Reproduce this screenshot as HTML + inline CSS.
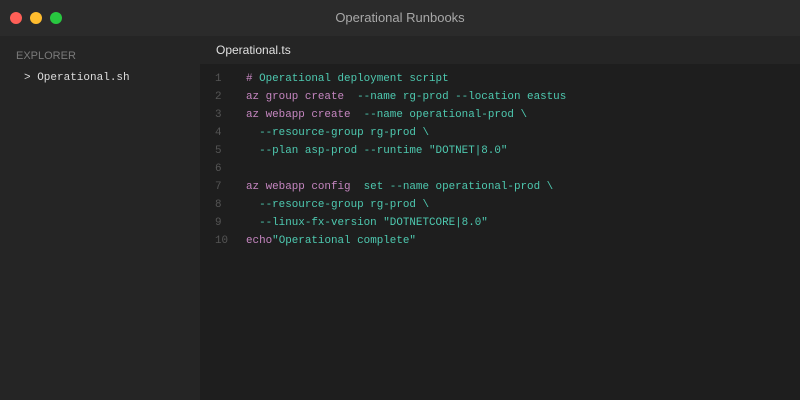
<!DOCTYPE html>
<html><head><style>
body{margin:0;width:800px;height:400px;background:#1e1e1e;overflow:hidden;font-family:"Liberation Sans",sans-serif}
.title{position:absolute;left:0;top:0;width:800px;height:36px;background:#2b2b2b;color:#a8a8a8;font-size:13px;text-align:center;line-height:36px}
.dot{position:absolute;top:12px;width:12px;height:12px;border-radius:50%}
.side{position:absolute;left:0;top:36px;width:200px;height:364px;background:#252525}
.exp{position:absolute;left:16px;top:14px;font-size:11px;color:#7a7a7a}
.file{position:absolute;left:24px;top:36px;font-family:"Liberation Mono",monospace;font-size:11px;color:#ddd}
.tabbar{position:absolute;left:200px;top:36px;width:600px;height:28px;background:#252525}
.tab{position:absolute;left:16px;top:0;line-height:28px;font-size:12px;color:#e0e0e0}
.code{position:absolute;left:200px;top:70px;font-family:"Liberation Mono",monospace;font-size:10.9px;line-height:18px;white-space:pre}
.ln{position:absolute;left:15px;color:#555;width:20px}
.tx{position:absolute;left:46px;color:#4ec9b0}
.k{color:#c586c0}
</style></head><body>
<div class="title">Operational Runbooks
<div class="dot" style="left:10px;background:#fe5f57"></div>
<div class="dot" style="left:30px;background:#febc2e"></div>
<div class="dot" style="left:50px;background:#28c840"></div>
</div>
<div class="side"><div class="exp">EXPLORER</div><div class="file">&gt; Operational.sh</div></div>
<div class="tabbar"><div class="tab">Operational.ts</div></div>
<div class="code">
<div class="ln" style="top:0">1</div><div class="tx" style="top:0"><span class="k">#</span> Operational deployment script</div>
<div class="ln" style="top:18px">2</div><div class="tx" style="top:18px"><span class="k">az group create</span>  --name rg-prod --location eastus</div>
<div class="ln" style="top:36px">3</div><div class="tx" style="top:36px"><span class="k">az webapp create</span>  --name operational-prod \</div>
<div class="ln" style="top:54px">4</div><div class="tx" style="top:54px">  --resource-group rg-prod \</div>
<div class="ln" style="top:72px">5</div><div class="tx" style="top:72px">  --plan asp-prod --runtime "DOTNET|8.0"</div>
<div class="ln" style="top:90px">6</div>
<div class="ln" style="top:108px">7</div><div class="tx" style="top:108px"><span class="k">az webapp config</span>  set --name operational-prod \</div>
<div class="ln" style="top:126px">8</div><div class="tx" style="top:126px">  --resource-group rg-prod \</div>
<div class="ln" style="top:144px">9</div><div class="tx" style="top:144px">  --linux-fx-version "DOTNETCORE|8.0"</div>
<div class="ln" style="top:162px">10</div><div class="tx" style="top:162px"><span class="k">echo</span>"Operational complete"</div>
</div>
</body></html>
